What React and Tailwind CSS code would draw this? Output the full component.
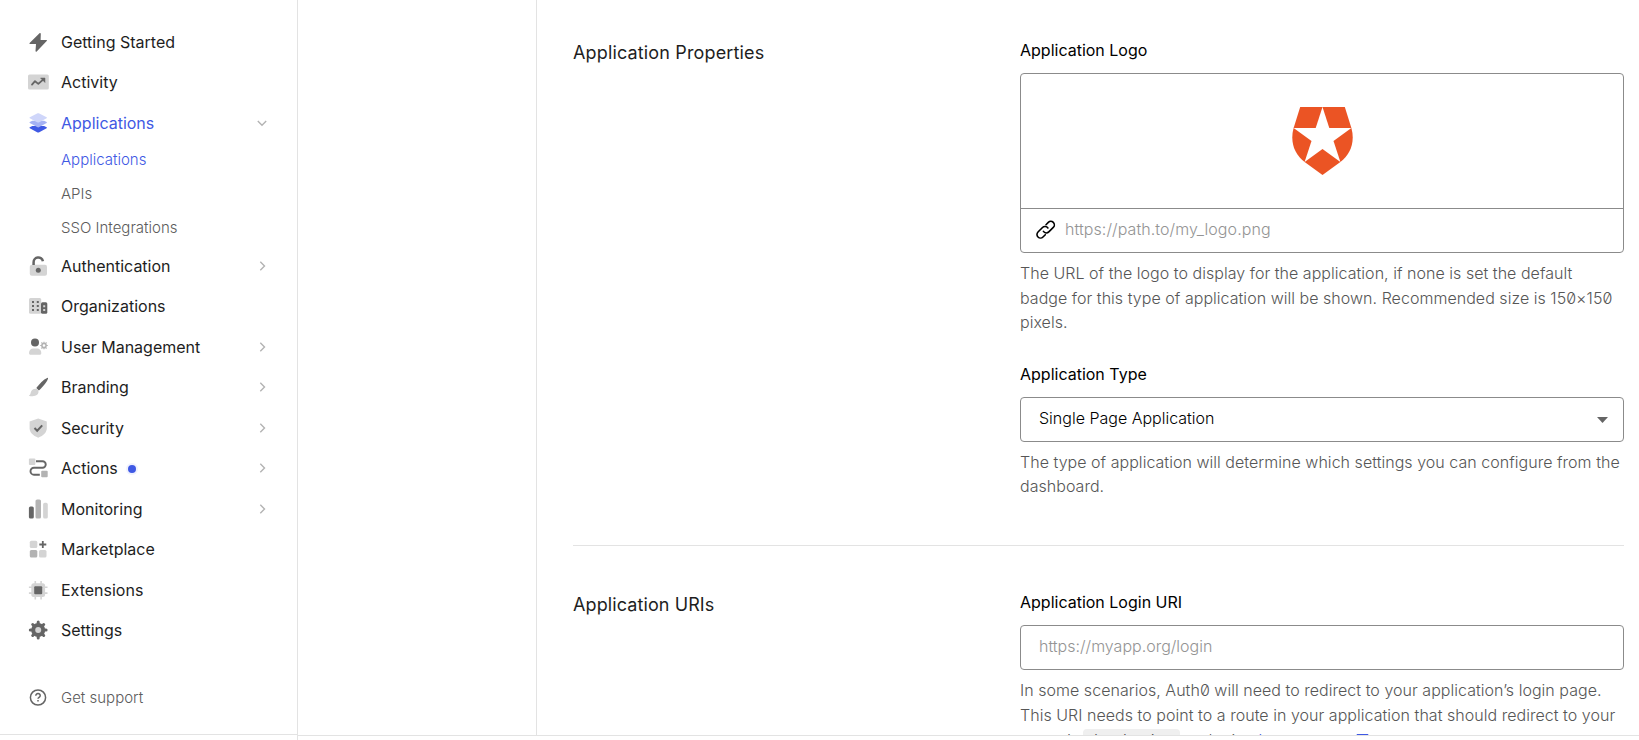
import React from "react";

const D = "#656565";

const Svg = ({ children }) => (
  <svg width="22" height="22" viewBox="0 0 22 22" fill="none" className="shrink-0">
    {children}
  </svg>
);

const icons = {
  bolt: (
    <Svg>
      <path d="M12.500 2.300 2.600 12c-.4.4-.2.9.4.9h6l-.5 7.100c0 .8.7 1 1.200.5L19.700 10c.4-.4.2-1-.4-1h-5.700l.2-6.200c0-.7-.8-1-1.300-.5z" fill="#656565" />
    </Svg>
  ),
  activity: (
    <Svg>
      <rect x="1" y="3.500" width="20.800" height="15" rx="1.500" fill="#d4d4d4" />
      <path d="m5 13.600 3-3.400 3.300 2.700 4.800-4.300" stroke="#656565" strokeWidth="1.800" strokeLinecap="round" strokeLinejoin="round" />
      <path d="M13.500 7h4.500v4.500z" fill="#656565" stroke="#656565" strokeWidth=".5" />
    </Svg>
  ),
  layers: (
    <Svg>
      <path d="m2.800 15.200 2.500-1.300h11.800l2.500 1.300c.5.300.5.700 0 1l-7.300 4.100c-.7.400-1.500.4-2.200 0l-7.300-4.100c-.5-.3-.5-.7 0-1z" fill="#3f59e4" />
      <path d="m2.800 10 2.500-1.200h11.800l2.500 1.200c.5.300.5.700 0 1l-7.300 4.100c-.7.400-1.500.4-2.200 0L2.800 11c-.5-.3-.5-.7 0-1z" fill="#a5b2f4" />
      <path d="m2.800 5.300 7.300-3.700c.7-.4 1.500-.4 2.200 0l7.300 3.700c.5.300.5.700 0 1l-7.300 3.900c-.7.400-1.500.4-2.200 0L2.800 6.300c-.5-.3-.5-.7 0-1z" fill="#cfd6fa" />
    </Svg>
  ),
  lock: (
    <Svg>
      <rect x="2.800" y="9.800" width="17.200" height="10.900" rx="2" fill="#d4d4d4" />
      <path d="M6.600 10V7.200a4.700 4.700 0 0 1 9.300-1" stroke="#656565" strokeWidth="2.500" />
      <circle cx="11.300" cy="15.200" r="2.500" fill="#656565" />
    </Svg>
  ),
  org: (
    <Svg>
      <rect x="2" y="3" width="12.200" height="15.800" rx="1.500" fill="#d4d4d4" />
      <rect x="14" y="7.200" width="6.300" height="11.600" rx="1.500" fill="#656565" />
      <path d="M5 6h2v2H5zM9.800 6h2v2h-2zM5 10h2v2H5zM9.800 10h2v2h-2zM5 14h2v2H5zM9.800 14h2v2h-2z" fill="#656565" />
      <path d="M16.200 10.200h2v2h-2zM16.200 14h2v2h-2z" fill="#d4d4d4" />
    </Svg>
  ),
  user: (
    <Svg>
      <circle cx="8" cy="6.500" r="4" fill="#656565" />
      <path d="M2 17c0-3 2-4.500 4-4.500h4.300c2 0 4 1.500 4 4.500 0 1.200-.6 1.800-1.800 1.800H3.800C2.600 18.800 2 18.200 2 17z" fill="#d4d4d4" />
      <circle cx="17" cy="9.500" r="2.100" stroke="#b3b3b3" strokeWidth="1.500" />
      <path d="M17 5.700v1.700M17 11.600v1.700M13.200 9.500h1.800M19 9.500h1.800M14.500 6.400l1.300 1.700M19.500 6.400l-1.300 1.700M14.500 12.600l1.300-1.700M19.500 12.600l-1.300-1.700" stroke="#b3b3b3" strokeWidth="1.200" />
    </Svg>
  ),
  brush: (
    <Svg>
      <path d="M9.300 11.900C12.400 7.700 16.500 3.400 20.200 1.900c.7-.2 1 .2.800.9-1.400 4-5.500 8.400-9.100 11.700z" fill="#656565" />
      <path d="M8.500 12.700c2 .2 3.200 1.500 3 3.200-.3 3-3.400 4.400-8 4.300-1 0-1.600-.2-1.600-.6 0-.5 1.300-.5 1.600-2 .4-2.800 2-5.200 5-4.900z" fill="#d4d4d4" />
    </Svg>
  ),
  shield: (
    <Svg>
      <path d="M11.200 1.500 19.800 4.500v6.800c0 4-3.200 7.300-8.600 9.500C5.800 18.600 2.600 15.300 2.600 11.300V4.500z" fill="#d4d4d4" />
      <path d="m7.500 11 2.700 2.700 5-5.300" stroke="#656565" strokeWidth="2" />
    </Svg>
  ),
  actions: (
    <Svg>
      <rect x="1.900" y="1.500" width="6.500" height="6.500" rx="1" fill="#d4d4d4" />
      <rect x="14.200" y="13.800" width="6.500" height="6.500" rx="1" fill="#b3b3b3" />
      <path d="M9 4.200h6.500a3.200 3.200 0 0 1 0 6.500H7a3.400 3.400 0 0 0 0 7h5.800" stroke="#656565" strokeWidth="1.900" />
    </Svg>
  ),
  monitoring: (
    <Svg>
      <rect x="1.900" y="8.500" width="4.900" height="12" rx="1.600" fill="#656565" />
      <rect x="8.500" y="1.500" width="5.500" height="19" rx="1.600" fill="#b3b3b3" />
      <rect x="16.100" y="4.800" width="4.700" height="15.700" rx="1.600" fill="#d4d4d4" />
    </Svg>
  ),
  market: (
    <Svg>
      <rect x="2.800" y="2.800" width="7.500" height="7.200" rx="1.500" fill="#d4d4d4" />
      <rect x="2.800" y="12" width="7.500" height="7.500" rx="1.500" fill="#b3b3b3" />
      <rect x="12" y="12" width="7.500" height="7.500" rx="1.500" fill="#d4d4d4" />
      <path d="M15.800 3v7M12.300 6.500h7" stroke="#656565" strokeWidth="1.800" />
    </Svg>
  ),
  chip: (
    <Svg>
      <path d="M8.300 1.900v18.600M14.100 1.900v18.600M1.900 8.300h18.600M1.900 14.100h18.600" stroke="#d4d4d4" strokeWidth="1.600" />
      <rect x="4.300" y="4.300" width="13.800" height="13.800" rx="2.500" fill="#d4d4d4" />
      <rect x="7.200" y="7.200" width="8" height="8" rx="1" fill="#656565" />
    </Svg>
  ),
  gear: (
    <Svg>
      <circle cx="11.200" cy="11" r="7" fill="#656565" />
      <path d="M11.200 3.100v15.800M3.300 11h15.800M5.700 5.500l11 11M16.700 5.500l-11 11" stroke="#656565" strokeWidth="3" strokeLinecap="round" />
      <circle cx="11.200" cy="11" r="3" fill="#d4d4d4" />
    </Svg>
  ),
};

const Chevron = ({ open }) => (
  <svg width="12" height="12" viewBox="0 0 12 12" fill="none" stroke="#b3b3b3" strokeWidth="1.400" className="ml-auto mr-[29px]">
    <path d={open ? "M1.800 4 6 8.200 10.200 4" : "M4.300 1.800 8.500 6l-4.200 4.200"} />
  </svg>
);

const NavItem = ({ icon, label, chevron, open, active, dot }) => (
  <div className={`flex h-[40.5px] items-center pl-[27px] text-base ${active ? "text-[#3f59e4]" : "text-[#1e1e1e]"}`}>
    {icons[icon]}
    <span className="ml-3">{label}</span>
    {dot && <span className="ml-[10px] mt-0.5 size-2 rounded-full bg-[#3f59e4] ring-2 ring-[#f0f2fe]" />}
    {chevron && <Chevron open={open} />}
  </div>
);

const SubItem = ({ label, active }) => (
  <div className={`flex h-[34px] items-center pl-[61px] text-[15px] font-light ${active ? "text-[#3f59e4]" : "text-[#5c5c5c]"}`}>{label}</div>
);

const Label = ({ children }) => <div className="text-base leading-6 text-black">{children}</div>;
const Help = ({ children, className }) => (
  <div className={`whitespace-nowrap text-base font-light leading-[24.5px] tracking-[0.035px] text-[#565656] ${className}`}>{children}</div>
);

export default function App() {
  return (
    <div className="flex h-[740px] w-full overflow-hidden bg-white font-[Inter,sans-serif]">
      <aside className="flex w-[298px] shrink-0 flex-col border-r border-[#e3e3e3]">
        <nav className="flex h-[735px] flex-col border-b border-[#e3e3e3] pt-[21.4px]">
          <NavItem icon="bolt" label="Getting Started" />
          <NavItem icon="activity" label="Activity" />
          <NavItem icon="layers" label="Applications" chevron open active />
          <div className="pt-[0.6px]">
            <SubItem label="Applications" active />
            <SubItem label="APIs" />
            <SubItem label="SSO Integrations" />
          </div>
          <NavItem icon="lock" label="Authentication" chevron />
          <NavItem icon="org" label="Organizations" />
          <NavItem icon="user" label="User Management" chevron />
          <NavItem icon="brush" label="Branding" chevron />
          <NavItem icon="shield" label="Security" chevron />
          <NavItem icon="actions" label="Actions" dot chevron />
          <NavItem icon="monitoring" label="Monitoring" chevron />
          <NavItem icon="market" label="Marketplace" />
          <NavItem icon="chip" label="Extensions" />
          <NavItem icon="gear" label="Settings" />
          <div className="mt-[28px] flex h-[40px] items-center pl-[27px] text-[15px] font-light text-[#5c5c5c]">
            <Svg>
              <circle cx="11" cy="10.500" r="7.600" stroke={D} strokeWidth="1.500" />
              <path d="M8.800 8.700c0-3 4.600-2.700 4.400 0-.1 1.600-2.100 1.600-2.200 3M11 13v1.500" stroke={D} strokeWidth="1.500" />
            </Svg>
            <span className="ml-3">Get support</span>
          </div>
        </nav>
      </aside>
      <div className="flex h-[736px] grow border-b border-[#e3e3e3]">
        <div className="w-[239px] shrink-0 border-r border-[#e3e3e3]" />
        <main className="grow overflow-hidden pl-9 pr-[15px]">
          <section className="flex h-[546px] border-b border-[#e3e3e3]">
            <h2 className="w-[447px] shrink-0 pt-[41px] text-lg leading-6 tracking-[0.15px] text-[#1e1e1e]">Application Properties</h2>
            <div className="grow pt-[38px]">
              <Label>Application Logo</Label>
              <div className="mt-[11px] h-[180px] rounded-[4px] border border-[#8b8b8b]">
                <div className="flex h-[135px] items-center justify-center border-b border-[#8b8b8b]">
                  <svg width="61" height="68" viewBox="0 0 61 68" fill="#eb5424">
                    <path d="M8.200 0h22.300l-6.800 21H1.600z" />
                    <path d="M52.800 0H30.500l6.800 21h22.100z" />
                    <path d="M59.400 21 41.500 33.900l6.900 21C57.900 48 63.400 35.500 59.400 21z" />
                    <path d="M1.600 21 19.500 33.900l-6.900 21C3.100 48-2.400 35.500 1.600 21z" />
                    <path d="M12.600 54.900 30.500 42l17.900 12.900L30.500 68z" />
                  </svg>
                </div>
                <div className="flex h-[43px] items-center gap-[9px] pl-[15px] text-base font-light tracking-[0.07px] text-[#949494]">
                  <svg width="20" height="20" viewBox="0 0 20 20" fill="none" stroke="#000" strokeWidth="1.600" strokeLinecap="round" className="mb-px">
                    <path d="M10 4.700 12.300 2.400a3.500 3.500 0 0 1 5 5l-4.500 4.500a3.500 3.500 0 0 1-5.400-.5" />
                    <path d="M9.300 14.700 7 17a3.500 3.500 0 0 1-5-5l4.500-4.500a3.500 3.500 0 0 1 5.400.5" />
                  </svg>
                  <span className="pb-[3px]">https://path.to/my_logo.png</span>
                </div>
              </div>
              <Help className="mt-2">
                The URL of the logo to display for the application, if none is set the default<br />
                badge for this type of application will be shown. Recommended size is <span className="slashed-zero">150×150</span><br />
                pixels.
              </Help>
              <div className="mt-[27px]"><Label>Application Type</Label></div>
              <div className="mt-[11px] flex h-[45px] items-center justify-between rounded-[4px] border border-[#8b8b8b] pl-[18px] pr-[15px] text-base font-light text-black">
                <span className="pb-[2px]">Single Page Application</span>
                <svg width="11" height="6" viewBox="0 0 11 6" className="mt-px"><path d="M0 0h11L5.500 6z" fill="#656565" /></svg>
              </div>
              <Help className="mt-2">
                The type of application will determine which settings you can configure from the<br />
                dashboard.
              </Help>
            </div>
          </section>
          <section className="flex">
            <h2 className="w-[447px] shrink-0 pt-[47px] text-lg leading-6 tracking-[0.1px] text-[#1e1e1e]">Application URIs</h2>
            <div className="grow pt-[44px]">
              <Label>Application Login URI</Label>
              <div className="mt-[11px] flex h-[45px] items-center rounded-[4px] border border-[#8b8b8b] pb-[3px] pl-[18px] text-base font-light text-[#949494]">https://myapp.org/login</div>
              <Help className="mt-2">
                In some scenarios, Auth<span className="slashed-zero">0</span> will need to redirect to your application’s login page.<br />
                This URI needs to point to a route in your application that should redirect to your
                <div className="flex pt-px">
                  <span className="w-[63px]">tenant’s</span>
                  <code className="mr-1 mt-px h-[24px] w-[97px] rounded bg-[#efefef] text-center font-['Liberation_Mono',monospace] text-sm leading-[25px]">/authorize</code>
                  <span>endpoint.</span>
                  <span className="ml-1 flex gap-[12px] text-[#3f59e4]">
                    Learn more
                    <svg width="13" height="16" viewBox="0 0 13 16" fill="none" stroke="#3f59e4" strokeWidth="1.500" className="mt-[4px]">
                      <path d="M5 2.800H1.500v10h10V9M5 2.800h6.500V8M11 3.300l-6 6" />
                    </svg>
                  </span>
                </div>
              </Help>
            </div>
          </section>
        </main>
      </div>
    </div>
  );
}
